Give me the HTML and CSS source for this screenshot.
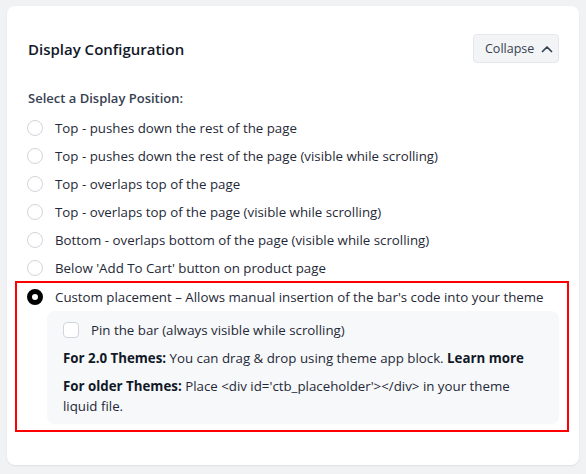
FILE: index.html
```html
<!DOCTYPE html>
<html lang="en">
<head>
<meta charset="utf-8">
<link rel="stylesheet" href="styles.css">
</head>
<body>
<div class="card">
  <div class="card-header">
    <h2 class="title">Display Configuration</h2>
    <button class="collapse-btn">Collapse
      <svg class="chev" width="12" height="8" viewBox="0 0 12 8"><path d="M1.5 6.5 L6 2 L10.5 6.5" fill="none" stroke="#374151" stroke-width="1.7" stroke-linecap="round" stroke-linejoin="round"/></svg>
    </button>
  </div>
  <div class="section-label">Select a Display Position:</div>
  <div class="options">
    <label class="option"><span class="radio"></span><span>Top - pushes down the rest of the page</span></label>
    <label class="option"><span class="radio"></span><span>Top - pushes down the rest of the page (visible while scrolling)</span></label>
    <label class="option"><span class="radio"></span><span>Top - overlaps top of the page</span></label>
    <label class="option"><span class="radio"></span><span>Top - overlaps top of the page (visible while scrolling)</span></label>
    <label class="option"><span class="radio"></span><span>Bottom - overlaps bottom of the page (visible while scrolling)</span></label>
    <label class="option"><span class="radio"></span><span>Below 'Add To Cart' button on product page</span></label>
    <div class="highlight">
      <label class="option"><span class="radio checked"></span><span>Custom placement – Allows manual insertion of the bar's code into your theme</span></label>
      <div class="details">
        <label class="check-row"><span class="checkbox"></span><span>Pin the bar (always visible while scrolling)</span></label>
        <p class="note"><b>For 2.0 Themes:</b> You can drag &amp; drop using theme app block. <b>Learn more</b></p>
        <p class="note"><b>For older Themes:</b> Place &lt;div id='ctb_placeholder'&gt;&lt;/div&gt; in your theme liquid file.</p>
      </div>
    </div>
  </div>
</div>
</body>
</html>
```

FILE: styles.css
```css
* { box-sizing: border-box; }
html, body { margin: 0; }
body {
  background: #f1f2f4;
  padding: 6px 7px;
  font-family: "Open Sans", "Noto Sans", sans-serif;
  color: #1f2937;
}
.card {
  width: 572px;
  height: 459px;
  background: #fff;
  border-radius: 8px;
  box-shadow: 0 1px 2px rgba(0,0,0,0.08);
  padding: 28px 20px 0 20px;
}
.card-header {
  display: flex;
  align-items: center;
  justify-content: space-between;
  height: 29px;
}
.title {
  margin: 0 0 0 1px;
  font-size: 15px;
  font-weight: 600;
  color: #111827;
}
.collapse-btn {
  display: flex;
  align-items: center;
  gap: 7px;
  height: 29px;
  width: 86px;
  padding: 0 0 0 11px;
  background: #f3f4f6;
  border: 1px solid #e5e7eb;
  border-radius: 4px;
  font-family: inherit;
  font-size: 12.5px;
  color: #374151;
}
.section-label {
  margin-top: 25px;
  margin-left: 1px;
  line-height: 20px;
  font-size: 13px;
  font-weight: 600;
  color: #374151;
}
.options {
  margin-top: 6px;
  display: flex;
  flex-direction: column;
}
.option {
  display: flex;
  align-items: center;
  gap: 12px;
  height: 28px;
  font-size: 13.3px;
  color: #1f2937;
}
.radio {
  width: 16px;
  height: 16px;
  border-radius: 50%;
  border: 1px solid #d1d5db;
  background: #fff;
  flex: none;
}
.radio.checked {
  border: 5px solid #000;
}
.highlight {
  margin: -1px -10px 0 -12px;
  border: 2px solid #ff0000;
  padding: 0 8px 6px 10px;
}
.details {
  margin-left: 20px;
  background: #f7f8fa;
  border-radius: 8px;
  padding: 9px 16px 8px 16px;
  display: flex;
  flex-direction: column;
  gap: 8px;
}
.check-row {
  display: flex;
  align-items: center;
  gap: 12px;
  line-height: 20px;
  font-size: 13.3px;
  color: #1f2937;
}
.checkbox {
  width: 16px;
  height: 16px;
  border: 1px solid #d1d5db;
  border-radius: 4px;
  background: #fff;
  flex: none;
}
.note {
  margin: 0;
  font-size: 13.3px;
  line-height: 20px;
  color: #1f2937;
}
.note b { font-weight: 700; color: #111827; }
```
